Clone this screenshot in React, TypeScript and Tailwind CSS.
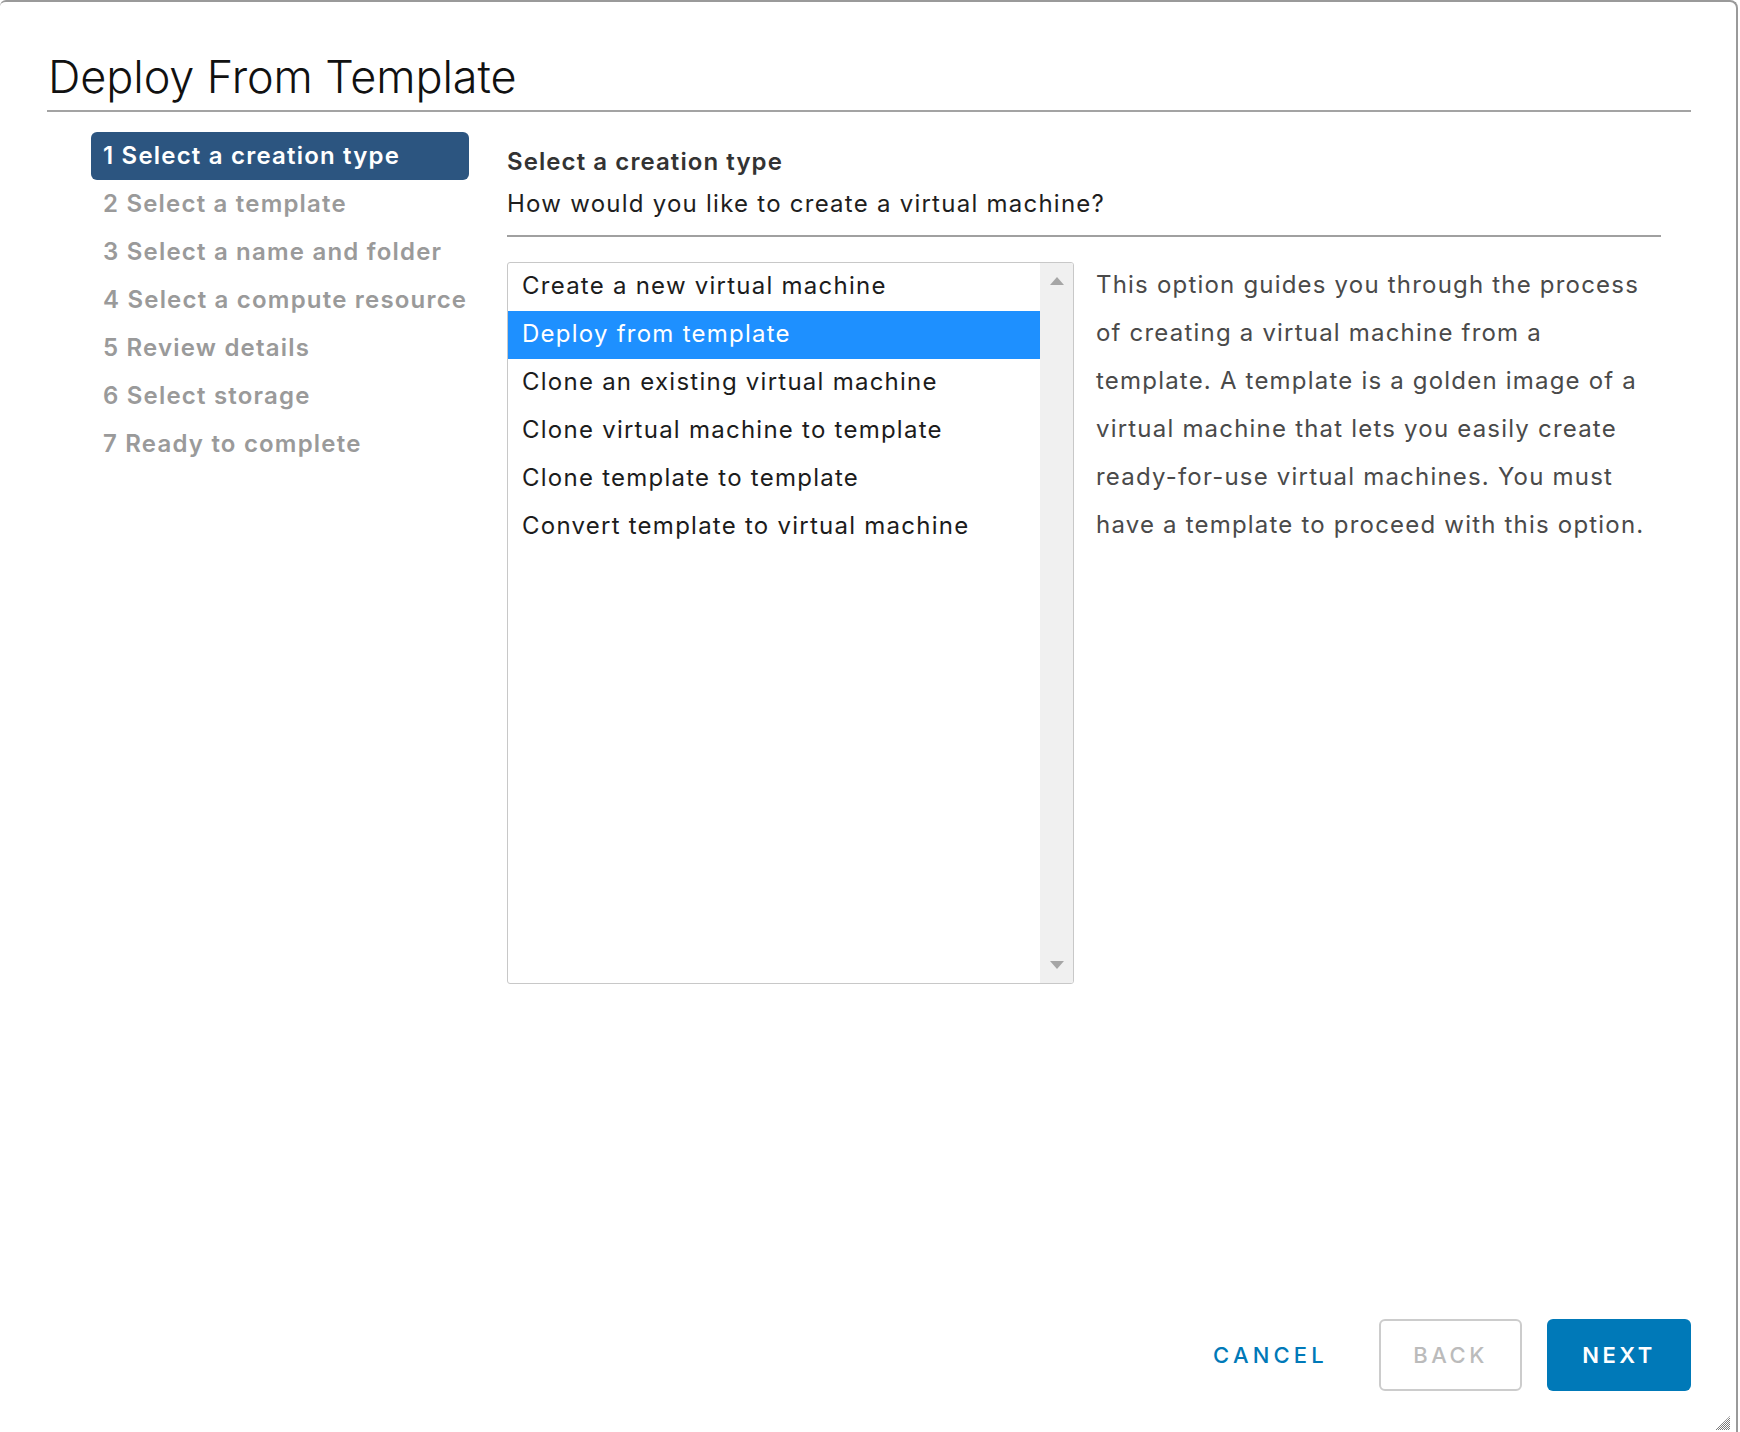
import React from "react";

const steps = [
  "1 Select a creation type",
  "2 Select a template",
  "3 Select a name and folder",
  "4 Select a compute resource",
  "5 Review details",
  "6 Select storage",
  "7 Ready to complete",
];

const options = [
  "Create a new virtual machine",
  "Deploy from template",
  "Clone an existing virtual machine",
  "Clone virtual machine to template",
  "Clone template to template",
  "Convert template to virtual machine",
];

const descLines = [
  "This option guides you through the process",
  "of creating a virtual machine from a",
  "template. A template is a golden image of a",
  "virtual machine that lets you easily create",
  "ready-for-use virtual machines. You must",
  "have a template to proceed with this option.",
];

export default function App() {
  return (
    <div className="w-full h-[1432px] bg-white font-['Inter',sans-serif] overflow-hidden">
      <div className="relative w-[1738px] h-[1432px] bg-white border-t-2 border-r-2 border-[#9a9a9a] rounded-tl-[6px] rounded-tr-[8px] flex flex-col pl-[47px] pr-[45px]">
        {/* Header */}
        <div className="pt-[52px] pb-[11px] border-b-2 border-[#a3a3a3]">
          <h1 className="pl-[1px] text-[45px] leading-[45px] font-light text-[#111] tracking-[-0.1px]">
            Deploy From Template
          </h1>
        </div>

        {/* Body */}
        <div className="flex flex-row mt-[20px]">
          {/* Steps nav */}
          <nav className="ml-[44px] w-[378px] flex flex-col">
            {steps.map((s, i) => (
              <div
                key={s}
                className={
                  i === 0
                    ? "h-[48px] leading-[47px] pl-[12px] rounded-[6px] bg-[#2c5580] text-white text-[24px] tracking-[0.05em] font-semibold whitespace-nowrap"
                    : "h-[48px] leading-[47px] pl-[12px] text-[#9a9a9a] text-[24px] tracking-[0.05em] font-semibold whitespace-nowrap"
                }
              >
                {s}
              </div>
            ))}
          </nav>

          {/* Content */}
          <div className="ml-[38px] mr-[30px] flex-1 flex flex-col">
            <div className="pt-[14px] pb-[15px] border-b-2 border-[#a0a0a0]">
              <div className="text-[24px] leading-[32px] tracking-[0.045em] font-semibold text-[#333]">
                Select a creation type
              </div>
              <div className="mt-[10px] text-[24px] leading-[32px] tracking-[0.052em] text-[#1e1e1e]">
                How would you like to create a virtual machine?
              </div>
            </div>

            <div className="mt-[25px] flex flex-row items-start">
              {/* List box */}
              <div className="w-[567px] h-[722px] border border-[#c8c8c8] rounded-[3px] flex flex-row overflow-hidden">
                <div className="flex-1 flex flex-col">
                  {options.map((o, i) => (
                    <div
                      key={o}
                      className={
                        i === 1
                          ? "h-[48px] leading-[46px] pl-[14px] text-[24px] tracking-[0.052em] bg-[#1e90ff] text-white whitespace-nowrap"
                          : "h-[48px] leading-[46px] pl-[14px] text-[24px] tracking-[0.052em] text-[#1c1c1c] whitespace-nowrap"
                      }
                    >
                      {o}
                    </div>
                  ))}
                </div>
                <div className="w-[33px] bg-[#f0f0f0] flex flex-col items-center justify-between py-[14px]">
                  <svg width="14" height="8" viewBox="0 0 14 8">
                    <polygon points="7,0 14,8 0,8" fill="#a6a6a6" />
                  </svg>
                  <svg width="14" height="8" viewBox="0 0 14 8">
                    <polygon points="0,0 14,0 7,8" fill="#a6a6a6" />
                  </svg>
                </div>
              </div>

              {/* Description */}
              <div className="ml-[22px] flex flex-col">
                {descLines.map((l) => (
                  <div
                    key={l}
                    className="h-[48px] leading-[46px] text-[24px] tracking-[0.05em] text-[#4a4a4a] whitespace-nowrap"
                  >
                    {l}
                  </div>
                ))}
              </div>
            </div>
          </div>
        </div>

        {/* Footer buttons */}
        <div className="mt-auto mb-[41px] flex flex-row justify-end items-center">
          <button className="w-[143px] h-[72px] mr-[37px] text-[#0079b8] text-[22px] font-medium tracking-[0.19em] uppercase">
            Cancel
          </button>
          <button className="w-[143px] h-[72px] mr-[25px] border-2 border-[#cccccc] rounded-[6px] text-[#bbbbbb] text-[22px] font-medium tracking-[0.16em] uppercase">
            Back
          </button>
          <button className="w-[144px] h-[72px] rounded-[6px] bg-[#0079b8] text-white text-[22px] font-semibold tracking-[0.16em] uppercase">
            Next
          </button>
        </div>

        {/* Resize grip */}
        <svg
          className="absolute right-[6px] bottom-[2px]"
          width="15"
          height="14"
          viewBox="0 0 15 14"
        >
          <defs>
            <pattern id="grip" width="2" height="2" patternUnits="userSpaceOnUse">
              <rect x="0" y="0" width="1" height="1" fill="#7a7a7a" />
              <rect x="1" y="1" width="1" height="1" fill="#7a7a7a" />
            </pattern>
          </defs>
          <polygon points="15,0 15,14 0,14" fill="url(#grip)" />
        </svg>
      </div>
    </div>
  );
}
